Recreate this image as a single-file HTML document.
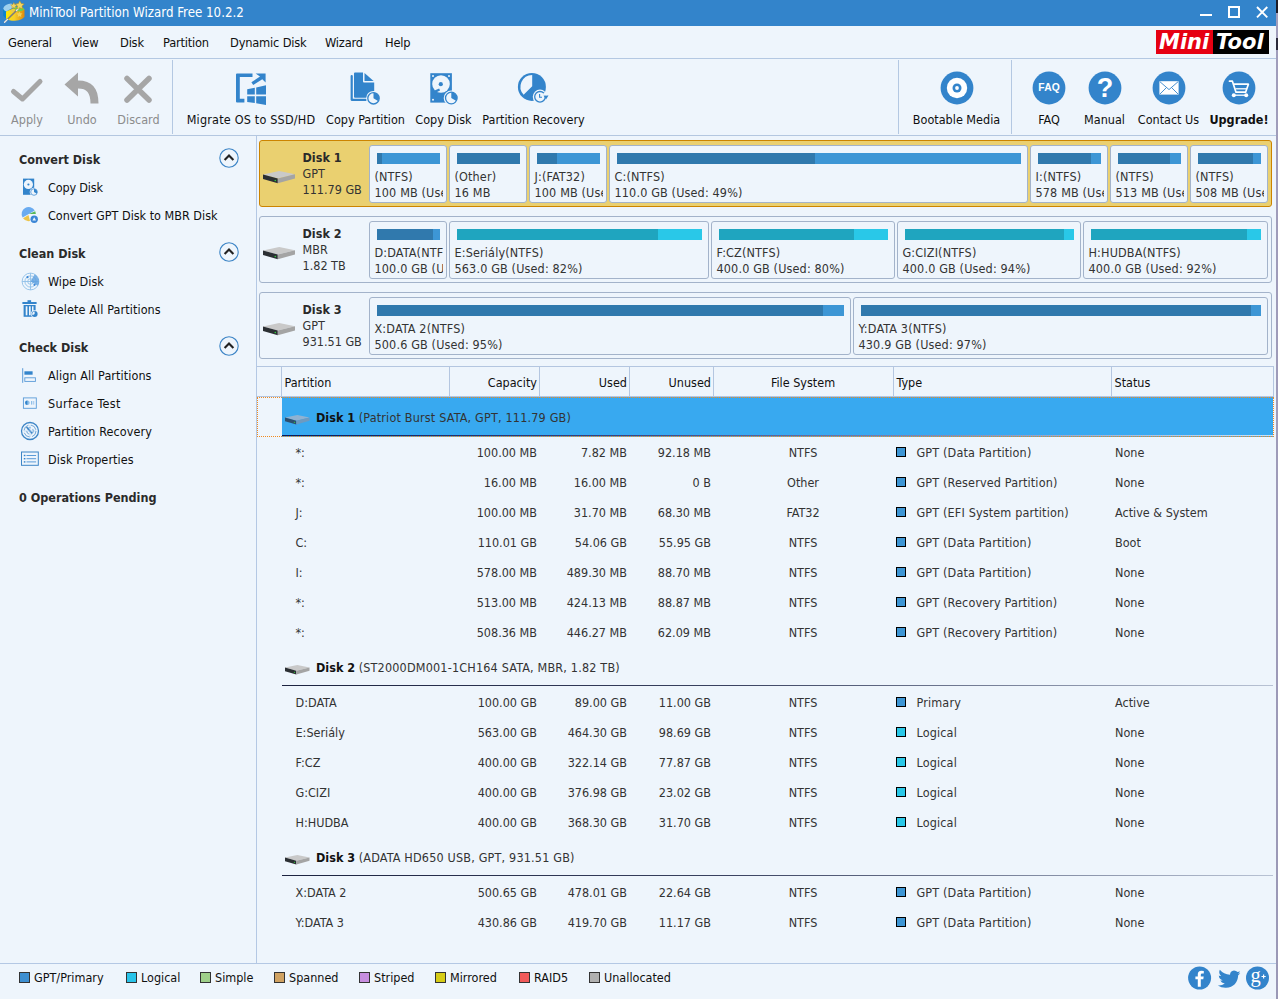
<!DOCTYPE html>
<html><head><meta charset="utf-8"><title>MiniTool Partition Wizard Free 10.2.2</title>
<style>
html,body{margin:0;padding:0}
body{width:1278px;height:999px;overflow:hidden;position:relative;background:#eef5fc;font-family:"DejaVu Sans Condensed","DejaVu Sans","Liberation Sans",sans-serif;font-size:12.5px;color:#101010}
.t{position:absolute;white-space:nowrap;line-height:16px;height:16px}
.b{font-weight:bold}
.g{color:#8c8c8c}
.w{color:#fff}
.d{color:#333}
svg{position:absolute;overflow:visible}
</style></head><body>

<div class="" style="position:absolute;left:0px;top:0px;width:1276px;height:26px;background:#3384cb"></div>
<div class="t w" style="left:29px;top:5.0px;font-size:13.200px">MiniTool Partition Wizard Free 10.2.2</div>
<svg style="left:0px;top:0px" width="28" height="26" viewBox="0 0 28 26">
<defs><linearGradient id="cy" x1="0" x2="1"><stop offset="0" stop-color="#fde800"/><stop offset="0.450" stop-color="#f6cf2a"/><stop offset="1" stop-color="#e08a0c"/></linearGradient></defs>
<path d="M3.200 8.500V15.500Q4 17.500 6.500 18.500V11.500Z" fill="#0a84cf"/>
<path d="M3.200 8.500Q4.500 4.200 11.500 3.600L13.500 7.200L6.300 11.600Q3.600 10.500 3.200 8.500Z" fill="#9dd0ee"/>
<path d="M6 11.500L13.500 8.500L24.500 9.500V16.500Q23 20 15 20.800Q8.500 20.800 6 18.500Z" fill="url(#cy)"/>
<path d="M13.500 8.500L17 6.500Q23 6.200 24.500 9.500Q22 11.500 18 11.500Z" fill="#6fd24a"/>
<path d="M4.600 22.300L18.600 8.400" stroke="#7d7d7d" stroke-width="1.500" stroke-linecap="round"/>
<path d="M4.600 22.300L7.500 19.400M16.500 10.500L18.600 8.400" stroke="#ececec" stroke-width="1.300" stroke-linecap="round"/>
<path d="M19.800 0.800l1.400 2.700 3 0.500 -2.200 2.100 0.500 3 -2.700 -1.400 -2.700 1.400 0.500 -3 -2.200 -2.100 3 -0.500z" fill="#f2d560" stroke="#b88a14" stroke-width="0.500"/>
<path d="M13.800 2.600l1 2 2.200 0.300 -1.600 1.500 0.400 2.200 -2 -1 -2 1 0.400 -2.200 -1.600 -1.500 2.200 -0.300z" fill="#f2d560" stroke="#b88a14" stroke-width="0.400"/>
<path d="M19.500 11.500l0.900 1.800 2 0.300 -1.400 1.400 0.300 2 -1.800 -0.900 -1.800 0.900 0.300 -2 -1.400 -1.400 2 -0.300z" fill="#f2d560" opacity="0.900"/>
<path d="M12.300 9l0.600 1.200 1.300 0.200 -0.900 0.900 0.200 1.300 -1.200 -0.600 -1.200 0.600 0.200 -1.300 -0.900 -0.900 1.300 -0.200z" fill="#e8c850"/>
</svg>
<div class="" style="position:absolute;left:1200px;top:14px;width:12px;height:2px;background:#fff"></div>
<div class="" style="position:absolute;left:1228px;top:6px;width:8px;height:8px;border:2px solid #fff"></div>
<svg style="left:1256px;top:6px" width="12" height="12" viewBox="0 0 12 12"><path d="M1 1L11.300 11.300M11.300 1L1 11.300" stroke="#fff" stroke-width="1.900"/></svg>
<div class="t " style="left:8px;top:35.0px;font-size:12.750px;letter-spacing:-0.200px">General</div>
<div class="t " style="left:72px;top:35.0px;font-size:12.750px;letter-spacing:-0.200px">View</div>
<div class="t " style="left:120px;top:35.0px;font-size:12.750px;letter-spacing:-0.200px">Disk</div>
<div class="t " style="left:163px;top:35.0px;font-size:12.750px;letter-spacing:-0.200px">Partition</div>
<div class="t " style="left:230px;top:35.0px;font-size:12.750px;letter-spacing:-0.200px">Dynamic Disk</div>
<div class="t " style="left:325px;top:35.0px;font-size:12.750px;letter-spacing:-0.200px">Wizard</div>
<div class="t " style="left:385px;top:35.0px;font-size:12.750px;letter-spacing:-0.200px">Help</div>
<div class="" style="position:absolute;left:0px;top:58px;width:1276px;height:1px;background:#b4c8e2"></div>
<div class="" style="position:absolute;left:1156px;top:30px;width:57px;height:24px;background:#e60012"></div>
<div class="" style="position:absolute;left:1213px;top:30px;width:56px;height:24px;background:#000"></div>
<div class="t" style="left:1159px;top:31px;height:22px;line-height:22px;font:italic bold 21px/22px 'DejaVu Sans',sans-serif;color:#fff">Mini</div>
<div class="t" style="left:1216px;top:31px;height:22px;line-height:22px;font:italic bold 21px/22px 'DejaVu Sans',sans-serif;color:#fff">Tool</div>
<div class="" style="position:absolute;left:0px;top:135px;width:1276px;height:1px;background:#b4c7e0"></div>
<div class="" style="position:absolute;left:172px;top:60px;width:1px;height:74px;background:#b4c8e2"></div>
<div class="" style="position:absolute;left:898px;top:60px;width:1px;height:74px;background:#b4c8e2"></div>
<div class="" style="position:absolute;left:1011px;top:60px;width:1px;height:74px;background:#b4c8e2"></div>
<div class="t g" style="left:-123px;width:300px;text-align:center;top:112.0px;">Apply</div>
<div class="t g" style="left:-68px;width:300px;text-align:center;top:112.0px;">Undo</div>
<div class="t g" style="left:-11.5px;width:300px;text-align:center;top:112.0px;">Discard</div>
<div class="t " style="left:101px;width:300px;text-align:center;top:112.0px;letter-spacing:0.200px">Migrate OS to SSD/HD</div>
<div class="t " style="left:215.5px;width:300px;text-align:center;top:112.0px;">Copy Partition</div>
<div class="t " style="left:293.5px;width:300px;text-align:center;top:112.0px;">Copy Disk</div>
<div class="t " style="left:383.5px;width:300px;text-align:center;top:112.0px;">Partition Recovery</div>
<div class="t " style="left:806.5px;width:300px;text-align:center;top:112.0px;">Bootable Media</div>
<div class="t " style="left:899px;width:300px;text-align:center;top:112.0px;">FAQ</div>
<div class="t " style="left:954.5px;width:300px;text-align:center;top:112.0px;">Manual</div>
<div class="t " style="left:1018.5px;width:300px;text-align:center;top:112.0px;">Contact Us</div>
<div class="t b" style="left:1089px;width:300px;text-align:center;top:112.0px;">Upgrade!</div>
<svg style="left:0;top:60px" width="172" height="60" viewBox="0 60 172 60"><path d="M13.5 91.5L22.5 99L40 81.5" fill="none" stroke="#a6a6a6" stroke-width="5" stroke-linecap="round" stroke-linejoin="round"/><path d="M64.5 84.5L78 72.5V80.5C92 80.5 98.5 88 98.5 103.5H90.5C90.5 93 87 88.5 78 88.500V96.500Z" fill="#a6a6a6"/><path d="M127 78.500L149 100M149 78.500L127 100" fill="none" stroke="#a6a6a6" stroke-width="5.500" stroke-linecap="round"/></svg>
<svg style="left:236px;top:73px" width="30" height="32" viewBox="0 0 30 32" fill="#3384cb"><path d="M0 1.400Q0 0.400 1 0.400H16.500V3.900H3.800V25.800H8.400V29.500H1Q0 29.500 0 28.500Z"/><path d="M19.600 0.400H29.600V9.600L26.300 6.300L17.200 11.900L15.400 9.200L24 3.600Z"/><path d="M11.200 16.200L18.800 14.800V21.600H11.200Z"/><path d="M20.200 14.500L30 12.200V21.600H20.200Z"/><path d="M11.200 23.200H18.800V30L11.200 29Z"/><path d="M20.200 23.200H30V32L20.200 30.300Z"/></svg>
<svg style="left:350px;top:72px" width="31" height="34" viewBox="0 0 31 34"><path d="M1.700 4V27.800H16" fill="none" stroke="#3384cb" stroke-width="2.200" stroke-linejoin="round" stroke-linecap="round"/><path d="M5 0.400H13V9.400Q13 10.400 14 10.400H24.200V24.800Q24.200 25.800 23.200 25.800H5Q4 25.800 4 24.800V1.400Q4 0.400 5 0.400Z" fill="#3384cb"/><path d="M14.500 1L23.600 9H14.500Z" fill="#3384cb"/><circle cx="23.500" cy="26.300" r="7.400" fill="#eef5fc"/><circle cx="23.500" cy="26.300" r="5.700" fill="none" stroke="#3384cb" stroke-width="1.300"/><path d="M23.500 26.300V20.600A5.700 5.700 0 0 1 28.400 29.200Z" fill="#3384cb"/></svg>
<svg style="left:430px;top:73px" width="30" height="33" viewBox="0 0 30 33"><rect x="0.300" y="0.200" width="21.600" height="29.400" fill="#3384cb"/><circle cx="11" cy="11" r="8.800" fill="#eef5fc"/><circle cx="10.800" cy="11.200" r="2.100" fill="#3384cb"/><path d="M4.500 17.600L9.200 15.600L10 17.400L6.200 19.400Z" fill="#3384cb"/><circle cx="3" cy="3" r="1" fill="#eef5fc"/><circle cx="19" cy="3" r="1" fill="#eef5fc"/><circle cx="3" cy="26.800" r="1" fill="#eef5fc"/><circle cx="21.300" cy="25" r="7.600" fill="#eef5fc"/><circle cx="21.300" cy="25" r="5.800" fill="none" stroke="#3384cb" stroke-width="1.300"/><path d="M21.300 25V19.200A5.800 5.800 0 0 1 26.300 28Z" fill="#3384cb"/></svg>
<svg style="left:517px;top:72px" width="32" height="34" viewBox="0 0 32 34"><circle cx="14.900" cy="14.900" r="14" fill="#3384cb"/><path d="M15.200 14.300V3A11.800 11.800 0 0 0 6.600 22.800Z" fill="#eef5fc"/><circle cx="23" cy="24.800" r="7.200" fill="#eef5fc"/><circle cx="23" cy="24.800" r="5.300" fill="none" stroke="#3384cb" stroke-width="1.300"/><path d="M26.500 23.500H31.500L29 27.500Z" fill="#3384cb"/><rect x="26.500" y="21" width="3" height="2.500" fill="#eef5fc"/><path d="M22.600 22V25.300H25" fill="none" stroke="#3384cb" stroke-width="1.100"/></svg>
<svg style="left:940.4px;top:71.300px" width="34" height="34" viewBox="-17 -17 34 34"><circle r="16.400" fill="#3384cb"/><circle r="10.200" fill="#fff"/><circle r="4.500" fill="#3384cb"/><circle r="1.900" fill="#fff"/></svg>
<svg style="left:1031.6px;top:71.300px" width="34" height="34" viewBox="-17 -17 34 34"><circle r="16.400" fill="#3384cb"/><text x="0.200" y="3.300" text-anchor="middle" font-family="Liberation Sans,sans-serif" font-weight="bold" font-size="10.300" fill="#fff" letter-spacing="0.200">FAQ</text></svg>
<svg style="left:1087.5px;top:71.300px" width="34" height="34" viewBox="-17 -17 34 34"><circle r="16.400" fill="#3384cb"/><text x="0" y="9.400" text-anchor="middle" font-family="Liberation Sans,sans-serif" font-weight="bold" font-size="27" fill="#fff">?</text></svg>
<svg style="left:1152.4px;top:71.300px" width="34" height="34" viewBox="-17 -17 34 34"><circle r="16.400" fill="#3384cb"/><rect x="-9.600" y="-6.800" width="19.200" height="13.400" fill="#fff"/><path d="M-9.200 -6.400L0 1.600L9.200 -6.400M-9.200 6.200L-2.500 -0.500M9.200 6.200L2.500 -0.500" fill="none" stroke="#3384cb" stroke-width="0.900"/></svg>
<svg style="left:1222.4px;top:71.300px" width="34" height="34" viewBox="-17 -17 34 34"><circle r="16.400" fill="#3384cb"/><path d="M-9.500 -6.800H-6.600L-3 4.200H6.600L9.400 -3.800H-5.200" fill="none" stroke="#fff" stroke-width="1.700" stroke-linejoin="round" stroke-linecap="round"/><path d="M-3.600 0.800H7.500" stroke="#fff" stroke-width="1.300"/><circle cx="-5.200" cy="7.200" r="2" fill="#fff"/><circle cx="7.200" cy="7.200" r="2" fill="#fff"/><path d="M-5 7.200H7" stroke="#fff" stroke-width="1.300"/></svg>
<div class="" style="position:absolute;left:256px;top:136px;width:1px;height:828px;background:#b4c8e4"></div>
<div class="t b" style="left:19px;top:152.0px;color:#2a2a2a">Convert Disk</div>
<div class="t b" style="left:19px;top:246.0px;color:#2a2a2a">Clean Disk</div>
<div class="t b" style="left:19px;top:340.0px;color:#2a2a2a">Check Disk</div>
<div class="t b" style="left:19px;top:490.0px;color:#2a2a2a">0 Operations Pending</div>
<svg style="left:217.500px;top:147.4px" width="22" height="22" viewBox="-11 -11 22 22"><circle r="9.200" fill="none" stroke="#3d85c6" stroke-width="1.100"/><path d="M-4.400 2L0 -2.500L4.400 2" fill="none" stroke="#222" stroke-width="2.100"/></svg>
<svg style="left:217.500px;top:241.4px" width="22" height="22" viewBox="-11 -11 22 22"><circle r="9.200" fill="none" stroke="#3d85c6" stroke-width="1.100"/><path d="M-4.400 2L0 -2.500L4.400 2" fill="none" stroke="#222" stroke-width="2.100"/></svg>
<svg style="left:217.500px;top:335.4px" width="22" height="22" viewBox="-11 -11 22 22"><circle r="9.200" fill="none" stroke="#3d85c6" stroke-width="1.100"/><path d="M-4.400 2L0 -2.500L4.400 2" fill="none" stroke="#222" stroke-width="2.100"/></svg>
<div class="t " style="left:48px;top:180.0px;letter-spacing:-0.150px">Copy Disk</div>
<div class="t " style="left:48px;top:208.0px;">Convert GPT Disk to MBR Disk</div>
<div class="t " style="left:48px;top:274.0px;">Wipe Disk</div>
<div class="t " style="left:48px;top:302.0px;letter-spacing:0.100px">Delete All Partitions</div>
<div class="t " style="left:48px;top:368.0px;letter-spacing:0.080px">Align All Partitions</div>
<div class="t " style="left:48px;top:396.0px;letter-spacing:0.380px">Surface Test</div>
<div class="t " style="left:48px;top:424.0px;letter-spacing:0.080px">Partition Recovery</div>
<div class="t " style="left:48px;top:452.0px;letter-spacing:0.080px">Disk Properties</div>
<svg style="left:22px;top:178px" width="18" height="19" viewBox="0 0 18 19"><rect x="1" y="0.600" width="11.200" height="16.200" fill="#3384cb"/><circle cx="6.400" cy="6.400" r="4.600" fill="#eef5fc"/><circle cx="6.400" cy="6.500" r="1.100" fill="#3384cb"/><circle cx="12" cy="14" r="4.300" fill="#eef5fc"/><circle cx="12" cy="14" r="3.300" fill="none" stroke="#5a9bd8" stroke-width="0.900"/><path d="M12 14V10.700A3.300 3.300 0 0 1 14.800 15.700Z" fill="#3384cb"/></svg>
<svg style="left:21px;top:206px" width="20" height="18" viewBox="0 0 20 18"><path d="M7.800 8.100L1.600 11.600A7 7 0 0 1 13.800 4.400Z" fill="#6aabf0"/><path d="M7.800 8.100L14.200 5.200A7 7 0 0 1 14.800 8.100Z" fill="#58b85a"/><path d="M7.500 9L9 15A7 7 0 0 1 2 12.200Z" fill="#ecc44a"/><circle cx="13.200" cy="13.300" r="3.700" fill="#3b86d6"/><path d="M13.200 11.200L15 14.400H11.400Z" fill="#eef5fc"/></svg>
<svg style="left:21px;top:272px" width="19" height="19" viewBox="-9.500 -9.500 19 19"><g fill="none" stroke="#8fbfe8" stroke-width="0.900"><circle r="8.400"/><circle r="5.600"/><circle r="2.800"/><path d="M-8.400 0H8.400M0 -8.400V8.400"/></g><path d="M0 0L4.200 -7.300A8.400 8.400 0 0 1 7.300 4.200Z" fill="#5b9fde" opacity="0.800"/><circle cx="-3" cy="-4.300" r="1.100" fill="#3b86d6"/><circle cx="4" cy="3.300" r="1.100" fill="#3b86d6"/></svg>
<svg style="left:22px;top:300px" width="17" height="18" viewBox="0 0 17 18"><rect x="5.500" y="0.200" width="3.600" height="2" fill="#3384cb"/><rect x="0.400" y="2" width="14.200" height="2" fill="#3384cb"/><rect x="1.600" y="5" width="12" height="11.800" fill="#3384cb"/><rect x="3.700" y="6.300" width="1.700" height="9" fill="#eef5fc"/><rect x="7" y="6.300" width="1.700" height="9" fill="#eef5fc"/><rect x="10" y="6.300" width="1.500" height="6" fill="#eef5fc"/><circle cx="12.600" cy="14" r="3.700" fill="#eef5fc"/><circle cx="12.600" cy="14" r="3" fill="#3384cb"/><path d="M12.600 14V11.600A2.400 2.400 0 0 0 10.600 15.300Z" fill="#eef5fc"/></svg>
<svg style="left:22px;top:368px" width="15" height="16" viewBox="0 0 15 16"><rect x="0.200" y="0.200" width="1" height="14.600" fill="#5a9bd8"/><rect x="2.400" y="3.300" width="8.200" height="3.400" fill="#3384cb"/><rect x="2.800" y="9.800" width="10.600" height="3.600" fill="none" stroke="#5a9bd8" stroke-width="0.900"/></svg>
<svg style="left:22px;top:397px" width="16" height="13" viewBox="0 0 16 13"><rect x="1.400" y="0.900" width="12.900" height="10.400" fill="none" stroke="#5a9bd8" stroke-width="0.900"/><circle cx="5.400" cy="5.700" r="2.300" fill="#8fbfe8"/><path d="M5.400 3.400A2.300 2.300 0 0 0 5.400 8Z" fill="#3384cb"/><rect x="9" y="4" width="1.300" height="3.600" fill="#8fbfe8"/><rect x="11" y="4" width="1.300" height="3.600" fill="#b0d0f0"/></svg>
<svg style="left:20px;top:421px" width="20" height="20" viewBox="-10 -10 20 20"><g fill="none" stroke="#3d85c6"><circle r="8.500" stroke-width="1.300"/><circle r="6" stroke-width="0.700" stroke-dasharray="7 2.500"/><circle r="3.300" stroke-width="0.700" stroke-dasharray="4 2"/><path d="M-3.500 -4L2 2.200" stroke-width="1.500"/><path d="M-6 0H6M0 -6V6" stroke-width="0.500" stroke="#8fbfe8"/></g></svg>
<svg style="left:20px;top:451px" width="20" height="16" viewBox="0 0 20 16"><rect x="1.500" y="1" width="16.800" height="13.300" fill="none" stroke="#3d85c6" stroke-width="1"/><g fill="#3384cb"><rect x="3.800" y="3.800" width="1.600" height="1.400"/><rect x="3.800" y="7" width="1.600" height="1.400"/><rect x="3.800" y="10.200" width="1.600" height="1.400"/></g><g fill="#5a9bd8"><rect x="6.500" y="4" width="9.600" height="1"/><rect x="6.500" y="7.200" width="9.600" height="1"/><rect x="6.500" y="10.400" width="9.600" height="1"/></g></svg>
<div class="" style="position:absolute;left:259px;top:140px;width:1011px;height:65px;background:#ead070;border:1px solid #cc8400;border-radius:3px"></div>
<svg style="left:263px;top:170.6px" width="32" height="12.5" viewBox="0 0 32 12.500"><path d="M0 3.400L16.200 0L32 3.200L14.800 7.400Z" fill="#c9c9c9"/><path d="M0 3.400L14.800 7.400V12.300L0 8.100Z" fill="#2b2f33"/><path d="M14.800 7.400L32 3.200V7.400L14.800 12.300Z" fill="#a4a4a4"/><circle cx="12.300" cy="9.500" r="0.800" fill="#2fd03a"/></svg>
<div class="t b" style="left:302.5px;top:150.0px;color:#2a2a2a">Disk 1</div>
<div class="t d" style="left:302.5px;top:166.0px;">GPT</div>
<div class="t d" style="left:302.5px;top:182.0px;">111.79 GB</div>
<div class="" style="position:absolute;left:369px;top:145px;width:76px;height:56px;background:#eef5fc;border:1px solid #a3b3ca;border-radius:3px;overflow:hidden"><div style="position:absolute;left:0;top:0;width:73px;height:56px;overflow:hidden"><div style="position:absolute;left:7px;top:7px;width:63px;height:11px;background:#3d96d5"><div style="width:5px;height:11px;background:#3079ad"></div></div><div class="t d" style="left:4.500px;top:23px;letter-spacing:0.150px">(NTFS)</div><div class="t d" style="left:4.500px;top:39px;letter-spacing:0.150px">100 MB (Used: 8%)</div></div></div>
<div class="" style="position:absolute;left:449px;top:145px;width:76px;height:56px;background:#eef5fc;border:1px solid #a3b3ca;border-radius:3px;overflow:hidden"><div style="position:absolute;left:0;top:0;width:73px;height:56px;overflow:hidden"><div style="position:absolute;left:7px;top:7px;width:63px;height:11px;background:#3d96d5"><div style="width:63px;height:11px;background:#3079ad"></div></div><div class="t d" style="left:4.500px;top:23px;letter-spacing:0.150px">(Other)</div><div class="t d" style="left:4.500px;top:39px;letter-spacing:0.150px">16 MB</div></div></div>
<div class="" style="position:absolute;left:529px;top:145px;width:76px;height:56px;background:#eef5fc;border:1px solid #a3b3ca;border-radius:3px;overflow:hidden"><div style="position:absolute;left:0;top:0;width:73px;height:56px;overflow:hidden"><div style="position:absolute;left:7px;top:7px;width:63px;height:11px;background:#3d96d5"><div style="width:20px;height:11px;background:#3079ad"></div></div><div class="t d" style="left:4.500px;top:23px;letter-spacing:0.150px">J:(FAT32)</div><div class="t d" style="left:4.500px;top:39px;letter-spacing:0.150px">100 MB (Used: 32%)</div></div></div>
<div class="" style="position:absolute;left:609px;top:145px;width:417px;height:56px;background:#eef5fc;border:1px solid #a3b3ca;border-radius:3px;overflow:hidden"><div style="position:absolute;left:0;top:0;width:414px;height:56px;overflow:hidden"><div style="position:absolute;left:7px;top:7px;width:404px;height:11px;background:#3d96d5"><div style="width:198px;height:11px;background:#3079ad"></div></div><div class="t d" style="left:4.500px;top:23px;letter-spacing:0.150px">C:(NTFS)</div><div class="t d" style="left:4.500px;top:39px;letter-spacing:0.150px">110.0 GB (Used: 49%)</div></div></div>
<div class="" style="position:absolute;left:1030px;top:145px;width:76px;height:56px;background:#eef5fc;border:1px solid #a3b3ca;border-radius:3px;overflow:hidden"><div style="position:absolute;left:0;top:0;width:73px;height:56px;overflow:hidden"><div style="position:absolute;left:7px;top:7px;width:63px;height:11px;background:#3d96d5"><div style="width:53px;height:11px;background:#3079ad"></div></div><div class="t d" style="left:4.500px;top:23px;letter-spacing:0.150px">I:(NTFS)</div><div class="t d" style="left:4.500px;top:39px;letter-spacing:0.150px">578 MB (Used: 85%)</div></div></div>
<div class="" style="position:absolute;left:1110px;top:145px;width:76px;height:56px;background:#eef5fc;border:1px solid #a3b3ca;border-radius:3px;overflow:hidden"><div style="position:absolute;left:0;top:0;width:73px;height:56px;overflow:hidden"><div style="position:absolute;left:7px;top:7px;width:63px;height:11px;background:#3d96d5"><div style="width:52px;height:11px;background:#3079ad"></div></div><div class="t d" style="left:4.500px;top:23px;letter-spacing:0.150px">(NTFS)</div><div class="t d" style="left:4.500px;top:39px;letter-spacing:0.150px">513 MB (Used: 83%)</div></div></div>
<div class="" style="position:absolute;left:1190px;top:145px;width:76px;height:56px;background:#eef5fc;border:1px solid #a3b3ca;border-radius:3px;overflow:hidden"><div style="position:absolute;left:0;top:0;width:73px;height:56px;overflow:hidden"><div style="position:absolute;left:7px;top:7px;width:63px;height:11px;background:#3d96d5"><div style="width:55px;height:11px;background:#3079ad"></div></div><div class="t d" style="left:4.500px;top:23px;letter-spacing:0.150px">(NTFS)</div><div class="t d" style="left:4.500px;top:39px;letter-spacing:0.150px">508 MB (Used: 88%)</div></div></div>
<div class="" style="position:absolute;left:259px;top:216px;width:1011px;height:65px;border:1px solid #a3b3ca;border-radius:3px"></div>
<svg style="left:263px;top:246.6px" width="32" height="12.5" viewBox="0 0 32 12.500"><path d="M0 3.400L16.200 0L32 3.200L14.800 7.400Z" fill="#c9c9c9"/><path d="M0 3.400L14.800 7.400V12.300L0 8.100Z" fill="#2b2f33"/><path d="M14.800 7.400L32 3.200V7.400L14.800 12.300Z" fill="#a4a4a4"/><circle cx="12.300" cy="9.500" r="0.800" fill="#2fd03a"/></svg>
<div class="t b" style="left:302.5px;top:226.0px;color:#2a2a2a">Disk 2</div>
<div class="t d" style="left:302.5px;top:242.0px;">MBR</div>
<div class="t d" style="left:302.5px;top:258.0px;">1.82 TB</div>
<div class="" style="position:absolute;left:369px;top:221px;width:76px;height:56px;background:#eef5fc;border:1px solid #a3b3ca;border-radius:3px;overflow:hidden"><div style="position:absolute;left:0;top:0;width:73px;height:56px;overflow:hidden"><div style="position:absolute;left:7px;top:7px;width:63px;height:11px;background:#3d96d5"><div style="width:56px;height:11px;background:#3079ad"></div></div><div class="t d" style="left:4.500px;top:23px;letter-spacing:0.150px">D:DATA(NTFS)</div><div class="t d" style="left:4.500px;top:39px;letter-spacing:0.150px">100.0 GB (Used: 89%)</div></div></div>
<div class="" style="position:absolute;left:449px;top:221px;width:258px;height:56px;background:#eef5fc;border:1px solid #a3b3ca;border-radius:3px;overflow:hidden"><div style="position:absolute;left:0;top:0;width:255px;height:56px;overflow:hidden"><div style="position:absolute;left:7px;top:7px;width:245px;height:11px;background:#29c8e8"><div style="width:201px;height:11px;background:#1fa5bf"></div></div><div class="t d" style="left:4.500px;top:23px;letter-spacing:0.150px">E:Seriály(NTFS)</div><div class="t d" style="left:4.500px;top:39px;letter-spacing:0.150px">563.0 GB (Used: 82%)</div></div></div>
<div class="" style="position:absolute;left:711px;top:221px;width:182px;height:56px;background:#eef5fc;border:1px solid #a3b3ca;border-radius:3px;overflow:hidden"><div style="position:absolute;left:0;top:0;width:179px;height:56px;overflow:hidden"><div style="position:absolute;left:7px;top:7px;width:169px;height:11px;background:#29c8e8"><div style="width:135px;height:11px;background:#1fa5bf"></div></div><div class="t d" style="left:4.500px;top:23px;letter-spacing:0.150px">F:CZ(NTFS)</div><div class="t d" style="left:4.500px;top:39px;letter-spacing:0.150px">400.0 GB (Used: 80%)</div></div></div>
<div class="" style="position:absolute;left:897px;top:221px;width:182px;height:56px;background:#eef5fc;border:1px solid #a3b3ca;border-radius:3px;overflow:hidden"><div style="position:absolute;left:0;top:0;width:179px;height:56px;overflow:hidden"><div style="position:absolute;left:7px;top:7px;width:169px;height:11px;background:#29c8e8"><div style="width:159px;height:11px;background:#1fa5bf"></div></div><div class="t d" style="left:4.500px;top:23px;letter-spacing:0.150px">G:CIZI(NTFS)</div><div class="t d" style="left:4.500px;top:39px;letter-spacing:0.150px">400.0 GB (Used: 94%)</div></div></div>
<div class="" style="position:absolute;left:1083px;top:221px;width:183px;height:56px;background:#eef5fc;border:1px solid #a3b3ca;border-radius:3px;overflow:hidden"><div style="position:absolute;left:0;top:0;width:180px;height:56px;overflow:hidden"><div style="position:absolute;left:7px;top:7px;width:170px;height:11px;background:#29c8e8"><div style="width:156px;height:11px;background:#1fa5bf"></div></div><div class="t d" style="left:4.500px;top:23px;letter-spacing:0.150px">H:HUDBA(NTFS)</div><div class="t d" style="left:4.500px;top:39px;letter-spacing:0.150px">400.0 GB (Used: 92%)</div></div></div>
<div class="" style="position:absolute;left:259px;top:292px;width:1011px;height:65px;border:1px solid #a3b3ca;border-radius:3px"></div>
<svg style="left:263px;top:322.6px" width="32" height="12.5" viewBox="0 0 32 12.500"><path d="M0 3.400L16.200 0L32 3.200L14.800 7.400Z" fill="#c9c9c9"/><path d="M0 3.400L14.800 7.400V12.300L0 8.100Z" fill="#2b2f33"/><path d="M14.800 7.400L32 3.200V7.400L14.800 12.300Z" fill="#a4a4a4"/><circle cx="12.300" cy="9.500" r="0.800" fill="#2fd03a"/></svg>
<div class="t b" style="left:302.5px;top:302.0px;color:#2a2a2a">Disk 3</div>
<div class="t d" style="left:302.5px;top:318.0px;">GPT</div>
<div class="t d" style="left:302.5px;top:334.0px;">931.51 GB</div>
<div class="" style="position:absolute;left:369px;top:297px;width:480px;height:56px;background:#eef5fc;border:1px solid #a3b3ca;border-radius:3px;overflow:hidden"><div style="position:absolute;left:0;top:0;width:477px;height:56px;overflow:hidden"><div style="position:absolute;left:7px;top:7px;width:467px;height:11px;background:#3d96d5"><div style="width:446px;height:11px;background:#3079ad"></div></div><div class="t d" style="left:4.500px;top:23px;letter-spacing:0.150px">X:DATA 2(NTFS)</div><div class="t d" style="left:4.500px;top:39px;letter-spacing:0.150px">500.6 GB (Used: 95%)</div></div></div>
<div class="" style="position:absolute;left:853px;top:297px;width:413px;height:56px;background:#eef5fc;border:1px solid #a3b3ca;border-radius:3px;overflow:hidden"><div style="position:absolute;left:0;top:0;width:410px;height:56px;overflow:hidden"><div style="position:absolute;left:7px;top:7px;width:400px;height:11px;background:#3d96d5"><div style="width:390px;height:11px;background:#3079ad"></div></div><div class="t d" style="left:4.500px;top:23px;letter-spacing:0.150px">Y:DATA 3(NTFS)</div><div class="t d" style="left:4.500px;top:39px;letter-spacing:0.150px">430.9 GB (Used: 97%)</div></div></div>
<div class="" style="position:absolute;left:257px;top:366px;width:1017px;height:1px;background:#b4c6e0"></div>
<div class="" style="position:absolute;left:257px;top:396px;width:1017px;height:1px;background:#b4c6e0"></div>
<div class="" style="position:absolute;left:0px;top:963px;width:1276px;height:1px;background:#b4c8e4"></div>
<div class="" style="position:absolute;left:281px;top:367px;width:1px;height:30px;background:#b4c6e0"></div>
<div class="" style="position:absolute;left:449px;top:367px;width:1px;height:30px;background:#b4c6e0"></div>
<div class="" style="position:absolute;left:539px;top:367px;width:1px;height:30px;background:#b4c6e0"></div>
<div class="" style="position:absolute;left:629px;top:367px;width:1px;height:30px;background:#b4c6e0"></div>
<div class="" style="position:absolute;left:713px;top:367px;width:1px;height:30px;background:#b4c6e0"></div>
<div class="" style="position:absolute;left:893px;top:367px;width:1px;height:30px;background:#b4c6e0"></div>
<div class="" style="position:absolute;left:1111px;top:367px;width:1px;height:30px;background:#b4c6e0"></div>
<div class="" style="position:absolute;left:1273px;top:367px;width:1px;height:30px;background:#b4c6e0"></div>
<div class="t " style="left:284.5px;top:375.0px;">Partition</div>
<div class="t " style="right:741px;top:375.0px;">Capacity</div>
<div class="t " style="right:651px;top:375.0px;">Used</div>
<div class="t " style="right:567px;top:375.0px;">Unused</div>
<div class="t " style="left:653px;width:300px;text-align:center;top:375.0px;">File System</div>
<div class="t " style="left:896.5px;top:375.0px;">Type</div>
<div class="t " style="left:1114.5px;top:375.0px;">Status</div>
<div class="" style="position:absolute;left:282px;top:397px;width:991px;height:40px;background:#38a9f0"></div>
<div class="" style="position:absolute;left:282px;top:435px;width:991px;height:1px;background:linear-gradient(90deg,#0a1a5a 0,#3a4684 35%,#7a88b8 65%,#c8e4fa 100%)"></div>
<div class="" style="position:absolute;left:257px;top:397px;width:1017px;height:40px;border:1px dotted #f08a20;box-sizing:border-box"></div>
<svg style="left:284.5px;top:414.8px" width="24.5" height="9.6" viewBox="0 0 32 12.500"><path d="M0 3.400L16.200 0L32 3.200L14.800 7.400Z" fill="#8fb2d2"/><path d="M0 3.400L14.800 7.400V12.300L0 8.100Z" fill="#2d4f6e"/><path d="M14.800 7.400L32 3.200V7.400L14.800 12.300Z" fill="#6e9ac0"/><circle cx="12.300" cy="9.500" r="0.800" fill="#2fd03a"/></svg>
<div class="t" style="left:316px;top:410px"><b style="color:#111">Disk 1</b> <span class="d" style="letter-spacing:0.180px">(Patriot Burst SATA, GPT, 111.79 GB)</span></div>
<div class="t d" style="left:295.5px;top:445.0px;">*:</div>
<div class="t d" style="right:741px;top:445.0px;">100.00 MB</div>
<div class="t d" style="right:651px;top:445.0px;">7.82 MB</div>
<div class="t d" style="right:567px;top:445.0px;">92.18 MB</div>
<div class="t d" style="left:653px;width:300px;text-align:center;top:445.0px;">NTFS</div>
<div class="" style="position:absolute;left:896px;top:447px;width:8px;height:8px;background:#3d96d5;border:1px solid #000"></div>
<div class="t d" style="left:916.5px;top:445.0px;letter-spacing:0.150px">GPT (Data Partition)</div>
<div class="t d" style="left:1115px;top:445.0px;">None</div>
<div class="t d" style="left:295.5px;top:475.0px;">*:</div>
<div class="t d" style="right:741px;top:475.0px;">16.00 MB</div>
<div class="t d" style="right:651px;top:475.0px;">16.00 MB</div>
<div class="t d" style="right:567px;top:475.0px;">0 B</div>
<div class="t d" style="left:653px;width:300px;text-align:center;top:475.0px;">Other</div>
<div class="" style="position:absolute;left:896px;top:477px;width:8px;height:8px;background:#3d96d5;border:1px solid #000"></div>
<div class="t d" style="left:916.5px;top:475.0px;letter-spacing:0.150px">GPT (Reserved Partition)</div>
<div class="t d" style="left:1115px;top:475.0px;">None</div>
<div class="t d" style="left:295.5px;top:505.0px;">J:</div>
<div class="t d" style="right:741px;top:505.0px;">100.00 MB</div>
<div class="t d" style="right:651px;top:505.0px;">31.70 MB</div>
<div class="t d" style="right:567px;top:505.0px;">68.30 MB</div>
<div class="t d" style="left:653px;width:300px;text-align:center;top:505.0px;">FAT32</div>
<div class="" style="position:absolute;left:896px;top:507px;width:8px;height:8px;background:#3d96d5;border:1px solid #000"></div>
<div class="t d" style="left:916.5px;top:505.0px;letter-spacing:0.150px">GPT (EFI System partition)</div>
<div class="t d" style="left:1115px;top:505.0px;">Active &amp; System</div>
<div class="t d" style="left:295.5px;top:535.0px;">C:</div>
<div class="t d" style="right:741px;top:535.0px;">110.01 GB</div>
<div class="t d" style="right:651px;top:535.0px;">54.06 GB</div>
<div class="t d" style="right:567px;top:535.0px;">55.95 GB</div>
<div class="t d" style="left:653px;width:300px;text-align:center;top:535.0px;">NTFS</div>
<div class="" style="position:absolute;left:896px;top:537px;width:8px;height:8px;background:#3d96d5;border:1px solid #000"></div>
<div class="t d" style="left:916.5px;top:535.0px;letter-spacing:0.150px">GPT (Data Partition)</div>
<div class="t d" style="left:1115px;top:535.0px;">Boot</div>
<div class="t d" style="left:295.5px;top:565.0px;">I:</div>
<div class="t d" style="right:741px;top:565.0px;">578.00 MB</div>
<div class="t d" style="right:651px;top:565.0px;">489.30 MB</div>
<div class="t d" style="right:567px;top:565.0px;">88.70 MB</div>
<div class="t d" style="left:653px;width:300px;text-align:center;top:565.0px;">NTFS</div>
<div class="" style="position:absolute;left:896px;top:567px;width:8px;height:8px;background:#3d96d5;border:1px solid #000"></div>
<div class="t d" style="left:916.5px;top:565.0px;letter-spacing:0.150px">GPT (Data Partition)</div>
<div class="t d" style="left:1115px;top:565.0px;">None</div>
<div class="t d" style="left:295.5px;top:595.0px;">*:</div>
<div class="t d" style="right:741px;top:595.0px;">513.00 MB</div>
<div class="t d" style="right:651px;top:595.0px;">424.13 MB</div>
<div class="t d" style="right:567px;top:595.0px;">88.87 MB</div>
<div class="t d" style="left:653px;width:300px;text-align:center;top:595.0px;">NTFS</div>
<div class="" style="position:absolute;left:896px;top:597px;width:8px;height:8px;background:#3d96d5;border:1px solid #000"></div>
<div class="t d" style="left:916.5px;top:595.0px;letter-spacing:0.150px">GPT (Recovery Partition)</div>
<div class="t d" style="left:1115px;top:595.0px;">None</div>
<div class="t d" style="left:295.5px;top:625.0px;">*:</div>
<div class="t d" style="right:741px;top:625.0px;">508.36 MB</div>
<div class="t d" style="right:651px;top:625.0px;">446.27 MB</div>
<div class="t d" style="right:567px;top:625.0px;">62.09 MB</div>
<div class="t d" style="left:653px;width:300px;text-align:center;top:625.0px;">NTFS</div>
<div class="" style="position:absolute;left:896px;top:627px;width:8px;height:8px;background:#3d96d5;border:1px solid #000"></div>
<div class="t d" style="left:916.5px;top:625.0px;letter-spacing:0.150px">GPT (Recovery Partition)</div>
<div class="t d" style="left:1115px;top:625.0px;">None</div>
<svg style="left:284.5px;top:664.8px" width="24.5" height="9.6" viewBox="0 0 32 12.500"><path d="M0 3.400L16.200 0L32 3.200L14.800 7.400Z" fill="#c9c9c9"/><path d="M0 3.400L14.800 7.400V12.300L0 8.100Z" fill="#2b2f33"/><path d="M14.800 7.400L32 3.200V7.400L14.800 12.300Z" fill="#a4a4a4"/><circle cx="12.300" cy="9.500" r="0.800" fill="#2fd03a"/></svg>
<div class="" style="position:absolute;left:282px;top:685px;width:991px;height:1px;background:linear-gradient(90deg,#1c2340 0,#3a4260 45%,#b8c2d4 100%)"></div>
<div class="t" style="left:316px;top:660px"><b style="color:#111">Disk 2</b> <span class="d" style="letter-spacing:0.180px">(ST2000DM001-1CH164 SATA, MBR, 1.82 TB)</span></div>
<div class="t d" style="left:295.5px;top:695.0px;">D:DATA</div>
<div class="t d" style="right:741px;top:695.0px;">100.00 GB</div>
<div class="t d" style="right:651px;top:695.0px;">89.00 GB</div>
<div class="t d" style="right:567px;top:695.0px;">11.00 GB</div>
<div class="t d" style="left:653px;width:300px;text-align:center;top:695.0px;">NTFS</div>
<div class="" style="position:absolute;left:896px;top:697px;width:8px;height:8px;background:#3d96d5;border:1px solid #000"></div>
<div class="t d" style="left:916.5px;top:695.0px;letter-spacing:0.150px">Primary</div>
<div class="t d" style="left:1115px;top:695.0px;">Active</div>
<div class="t d" style="left:295.5px;top:725.0px;">E:Seriály</div>
<div class="t d" style="right:741px;top:725.0px;">563.00 GB</div>
<div class="t d" style="right:651px;top:725.0px;">464.30 GB</div>
<div class="t d" style="right:567px;top:725.0px;">98.69 GB</div>
<div class="t d" style="left:653px;width:300px;text-align:center;top:725.0px;">NTFS</div>
<div class="" style="position:absolute;left:896px;top:727px;width:8px;height:8px;background:#29c8e8;border:1px solid #000"></div>
<div class="t d" style="left:916.5px;top:725.0px;letter-spacing:0.150px">Logical</div>
<div class="t d" style="left:1115px;top:725.0px;">None</div>
<div class="t d" style="left:295.5px;top:755.0px;">F:CZ</div>
<div class="t d" style="right:741px;top:755.0px;">400.00 GB</div>
<div class="t d" style="right:651px;top:755.0px;">322.14 GB</div>
<div class="t d" style="right:567px;top:755.0px;">77.87 GB</div>
<div class="t d" style="left:653px;width:300px;text-align:center;top:755.0px;">NTFS</div>
<div class="" style="position:absolute;left:896px;top:757px;width:8px;height:8px;background:#29c8e8;border:1px solid #000"></div>
<div class="t d" style="left:916.5px;top:755.0px;letter-spacing:0.150px">Logical</div>
<div class="t d" style="left:1115px;top:755.0px;">None</div>
<div class="t d" style="left:295.5px;top:785.0px;">G:CIZI</div>
<div class="t d" style="right:741px;top:785.0px;">400.00 GB</div>
<div class="t d" style="right:651px;top:785.0px;">376.98 GB</div>
<div class="t d" style="right:567px;top:785.0px;">23.02 GB</div>
<div class="t d" style="left:653px;width:300px;text-align:center;top:785.0px;">NTFS</div>
<div class="" style="position:absolute;left:896px;top:787px;width:8px;height:8px;background:#29c8e8;border:1px solid #000"></div>
<div class="t d" style="left:916.5px;top:785.0px;letter-spacing:0.150px">Logical</div>
<div class="t d" style="left:1115px;top:785.0px;">None</div>
<div class="t d" style="left:295.5px;top:815.0px;">H:HUDBA</div>
<div class="t d" style="right:741px;top:815.0px;">400.00 GB</div>
<div class="t d" style="right:651px;top:815.0px;">368.30 GB</div>
<div class="t d" style="right:567px;top:815.0px;">31.70 GB</div>
<div class="t d" style="left:653px;width:300px;text-align:center;top:815.0px;">NTFS</div>
<div class="" style="position:absolute;left:896px;top:817px;width:8px;height:8px;background:#29c8e8;border:1px solid #000"></div>
<div class="t d" style="left:916.5px;top:815.0px;letter-spacing:0.150px">Logical</div>
<div class="t d" style="left:1115px;top:815.0px;">None</div>
<svg style="left:284.5px;top:854.8px" width="24.5" height="9.6" viewBox="0 0 32 12.500"><path d="M0 3.400L16.200 0L32 3.200L14.800 7.400Z" fill="#c9c9c9"/><path d="M0 3.400L14.800 7.400V12.300L0 8.100Z" fill="#2b2f33"/><path d="M14.800 7.400L32 3.200V7.400L14.800 12.300Z" fill="#a4a4a4"/><circle cx="12.300" cy="9.500" r="0.800" fill="#2fd03a"/></svg>
<div class="" style="position:absolute;left:282px;top:875px;width:991px;height:1px;background:linear-gradient(90deg,#1c2340 0,#3a4260 45%,#b8c2d4 100%)"></div>
<div class="t" style="left:316px;top:850px"><b style="color:#111">Disk 3</b> <span class="d" style="letter-spacing:0.180px">(ADATA HD650 USB, GPT, 931.51 GB)</span></div>
<div class="t d" style="left:295.5px;top:885.0px;">X:DATA 2</div>
<div class="t d" style="right:741px;top:885.0px;">500.65 GB</div>
<div class="t d" style="right:651px;top:885.0px;">478.01 GB</div>
<div class="t d" style="right:567px;top:885.0px;">22.64 GB</div>
<div class="t d" style="left:653px;width:300px;text-align:center;top:885.0px;">NTFS</div>
<div class="" style="position:absolute;left:896px;top:887px;width:8px;height:8px;background:#3d96d5;border:1px solid #000"></div>
<div class="t d" style="left:916.5px;top:885.0px;letter-spacing:0.150px">GPT (Data Partition)</div>
<div class="t d" style="left:1115px;top:885.0px;">None</div>
<div class="t d" style="left:295.5px;top:915.0px;">Y:DATA 3</div>
<div class="t d" style="right:741px;top:915.0px;">430.86 GB</div>
<div class="t d" style="right:651px;top:915.0px;">419.70 GB</div>
<div class="t d" style="right:567px;top:915.0px;">11.17 GB</div>
<div class="t d" style="left:653px;width:300px;text-align:center;top:915.0px;">NTFS</div>
<div class="" style="position:absolute;left:896px;top:917px;width:8px;height:8px;background:#3d96d5;border:1px solid #000"></div>
<div class="t d" style="left:916.5px;top:915.0px;letter-spacing:0.150px">GPT (Data Partition)</div>
<div class="t d" style="left:1115px;top:915.0px;">None</div>
<div class="" style="position:absolute;left:19px;top:972px;width:9px;height:9px;background:#3d8fd1;border:1px solid #333"></div>
<div class="t " style="left:34px;top:970.0px;">GPT/Primary</div>
<div class="" style="position:absolute;left:126px;top:972px;width:9px;height:9px;background:#29c4ea;border:1px solid #333"></div>
<div class="t " style="left:141px;top:970.0px;">Logical</div>
<div class="" style="position:absolute;left:200px;top:972px;width:9px;height:9px;background:#9fd08a;border:1px solid #333"></div>
<div class="t " style="left:215px;top:970.0px;">Simple</div>
<div class="" style="position:absolute;left:274px;top:972px;width:9px;height:9px;background:#d0a262;border:1px solid #333"></div>
<div class="t " style="left:289px;top:970.0px;">Spanned</div>
<div class="" style="position:absolute;left:359px;top:972px;width:9px;height:9px;background:#c78ee0;border:1px solid #333"></div>
<div class="t " style="left:374px;top:970.0px;">Striped</div>
<div class="" style="position:absolute;left:435px;top:972px;width:9px;height:9px;background:#d6cc16;border:1px solid #333"></div>
<div class="t " style="left:450px;top:970.0px;">Mirrored</div>
<div class="" style="position:absolute;left:519px;top:972px;width:9px;height:9px;background:#f05a5a;border:1px solid #333"></div>
<div class="t " style="left:534px;top:970.0px;">RAID5</div>
<div class="" style="position:absolute;left:589px;top:972px;width:9px;height:9px;background:#b0b0b0;border:1px solid #333"></div>
<div class="t " style="left:604px;top:970.0px;">Unallocated</div>
<svg style="left:1186px;top:963.800px" width="88" height="30" viewBox="1186 964 88 30"><circle cx="1199.600" cy="978" r="11.500" fill="#3384cb"/><path d="M1200.800 986.700V979.300H1203.300L1203.700 976.400H1200.800V974.700Q1200.800 973.500 1202.100 973.500H1203.800V970.900Q1202.600 970.700 1201.400 970.700Q1197.800 970.800 1197.800 974.300V976.400H1195.400V979.300H1197.800V986.700Z" fill="#fff"/><path d="M1240 971.200Q1238.800 971.900 1237.600 972.100Q1236.200 970.500 1234 970.500Q1230.200 970.800 1230 974.800Q1223.600 974.300 1219.800 969.800Q1218.200 973.400 1221 976Q1220 976 1218.800 975.400Q1219 979 1222.600 980.200Q1221.600 980.500 1220.400 980.300Q1221.400 983.200 1224.800 983.400Q1221.800 985.800 1217.800 985.400Q1221.600 987.900 1226 987.700Q1237.400 986.900 1238.200 975.200Q1239.400 974.400 1240.200 973.100Q1239 973.600 1237.900 973.700Q1239.400 972.800 1240 971.200Z" fill="#3384cb"/><circle cx="1257.500" cy="978" r="11.500" fill="#3384cb"/><text x="1255.700" y="982.200" text-anchor="middle" font-family="Liberation Serif,serif" font-size="20.500" fill="#fff">g</text><path d="M1261.500 976.500H1265.700M1263.600 974.400V978.600" stroke="#fff" stroke-width="1.200"/></svg>
<div class="" style="position:absolute;left:1276px;top:0px;width:2px;height:999px;background:linear-gradient(#1c1c28 0,#1c1c28 13px,#a09dbb 13px,#a09dbb 38px,#2a2a3a 38px,#2a2a3a 50px,#a09dbb 50px,#9a98b6 100%)"></div>
</body></html>
